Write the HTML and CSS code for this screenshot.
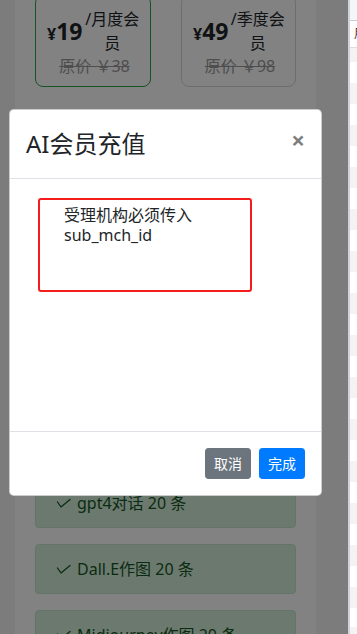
FILE: index.html
```html
<!DOCTYPE html>
<html lang="zh-CN">
<head>
<meta charset="utf-8">
<title>AI会员充值</title>
<link rel="stylesheet" href="styles.css">
</head>
<body>
<div class="app">
  <div class="page">
    <div class="panel">
      <div class="plans">
        <div class="plan active">
          <div class="price-row"><span class="price"><span class="cur">¥</span><span class="num">19</span></span><span class="unit">/月度会员</span></div>
          <div class="orig">原价 ￥38</div>
        </div>
        <div class="plan narrow">
          <div class="price-row"><span class="price"><span class="cur">¥</span><span class="num">49</span></span><span class="unit">/季度会员</span></div>
          <div class="orig">原价 ￥98</div>
        </div>
      </div>
      <div class="features">
        <div class="feature"><svg class="check" viewBox="0 0 15 10" width="15" height="10"><polyline points="1.5,4 5,9 14,1.5"/></svg><span>gpt4对话 20 条</span></div>
        <div class="feature"><svg class="check" viewBox="0 0 15 10" width="15" height="10"><polyline points="1.5,4 5,9 14,1.5"/></svg><span>Dall.E作图 20 条</span></div>
        <div class="feature"><svg class="check" viewBox="0 0 15 10" width="15" height="10"><polyline points="1.5,4 5,9 14,1.5"/></svg><span>Midjourney作图 20 条</span></div>
      </div>
    </div>
  </div>
  <div class="backdrop"></div>
  <div class="modal">
    <div class="modal-header">
      <h4 class="modal-title">AI会员充值</h4>
      <button class="close" type="button">×</button>
    </div>
    <div class="modal-body">
      <div class="notice">受理机构必须传入sub_mch_id</div>
    </div>
    <div class="modal-footer">
      <button class="btn btn-secondary" type="button">取消</button>
      <button class="btn btn-primary" type="button">完成</button>
    </div>
  </div>
</div>
<div class="side">
  <div class="side-top"></div>
  <div class="side-head">用户名</div>
  <div class="side-rows"></div>
</div>
</body>
</html>
```
FILE: styles.css
```css
html, body {
  margin: 0;
  padding: 0;
}
body {
  display: flex;
  width: 357px;
  height: 634px;
  overflow: hidden;
  font-family: "Noto Sans", "Noto Sans CJK SC", sans-serif;
  font-size: 16px;
  color: #212529;
}
.app {
  position: relative;
  flex: none;
  width: 348px;
  height: 634px;
  overflow: hidden;
}
.page {
  height: 100%;
  box-sizing: border-box;
  padding-left: 15px;
  background: #f2f3f2;
}
.panel {
  display: flow-root;
  width: 301px;
  height: 100%;
  box-sizing: border-box;
  padding: 0 20px;
  background: #fff;
}
.plans {
  display: flex;
  gap: 30px;
  margin-top: -5px;
}
.plan {
  box-sizing: border-box;
  width: 116px;
  padding: 11px 8px 9px 11px;
  border: 1px solid #d6d6d6;
  border-radius: 8px;
  background: #fff;
  text-align: center;
}
.plan.narrow {
  width: 115px;
}
.plan.active {
  border-color: #28a745;
}
.price-row {
  display: flex;
  align-items: center;
  justify-content: center;
}
.price {
  flex: none;
  white-space: nowrap;
  font-weight: 700;
  line-height: 1;
  color: #212529;
}
.cur {
  font-size: 16px;
}
.num {
  font-size: 23px;
}
.unit {
  font-size: 16px;
  line-height: 24px;
  text-align: center;
  color: #212529;
}
.orig {
  font-size: 16px;
  line-height: 22px;
  color: #999;
  text-decoration: line-through;
}
.features {
  margin-top: 391px;
}
.feature {
  display: flex;
  align-items: center;
  gap: 6px;
  padding: 12px 20px;
  margin-bottom: 16px;
  border: 1px solid #c3e6cb;
  border-radius: 4px;
  background: #d4edda;
  color: #155724;
  font-size: 16px;
  line-height: 24px;
  white-space: nowrap;
}
.check {
  flex: none;
  fill: none;
  stroke: currentColor;
  stroke-width: 1.3;
  stroke-linecap: round;
  stroke-linejoin: round;
}
.backdrop {
  position: absolute;
  inset: 0;
  background: rgba(0, 0, 0, 0.49);
}
.modal {
  position: absolute;
  left: 9px;
  top: 109px;
  width: 313px;
  box-sizing: border-box;
  background: #fff;
  border: 1px solid rgba(0, 0, 0, 0.2);
  border-radius: 4.8px;
}
.modal-header {
  display: flex;
  align-items: flex-start;
  justify-content: space-between;
  padding: 16px;
  border-bottom: 1px solid #dee2e6;
}
.modal-title {
  margin: 0;
  font-size: 24px;
  line-height: 36px;
  font-weight: 400;
  color: #212529;
}
.close {
  margin: -16px -16px -16px auto;
  padding: 18px 16px 14px;
  border: 0;
  background: transparent;
  font-family: "Noto Sans", sans-serif;
  font-size: 24px;
  font-weight: 700;
  line-height: 1;
  color: #000;
  opacity: 0.5;
  text-shadow: 0 1px 0 #fff;
}
.modal-body {
  box-sizing: border-box;
  height: 252px;
  padding: 16px;
}
.notice {
  box-sizing: border-box;
  width: 214px;
  height: 94px;
  margin: 3px 0 0 12px;
  padding: 5px 10px 0 24px;
  border: 2px solid #f51c1c;
  border-radius: 3px;
  font-size: 16px;
  line-height: 20px;
  color: #212529;
}
.modal-footer {
  display: flex;
  align-items: center;
  justify-content: flex-end;
  padding: 12px;
  border-top: 1px solid #dee2e6;
}
.btn {
  margin: 4px;
  padding: 4px 8px;
  border: 1px solid transparent;
  border-radius: 3.2px;
  font-family: "Noto Sans", "Noto Sans CJK SC", sans-serif;
  font-size: 14px;
  line-height: 21px;
  color: #fff;
}
.btn-secondary {
  background: #6c757d;
  border-color: #6c757d;
}
.btn-primary {
  background: #007bff;
  border-color: #007bff;
}
.side {
  flex: 1;
  min-width: 0;
  border-left: 2px solid #d0d4d9;
  background: #fff;
  overflow: hidden;
}
.side-top {
  height: 20px;
  background: #f5f6f8;
  border-bottom: 1px solid #c9ced6;
}
.side-head {
  height: 26px;
  padding-left: 4px;
  border-bottom: 1px solid #dedede;
  font-size: 12px;
  line-height: 26px;
  white-space: nowrap;
  color: #333;
}
.side-rows {
  height: 586px;
  background: repeating-linear-gradient(#f3f3f3 0 21px, #fff 21px 42px);
  background-position: 0 -7px;
}
```
